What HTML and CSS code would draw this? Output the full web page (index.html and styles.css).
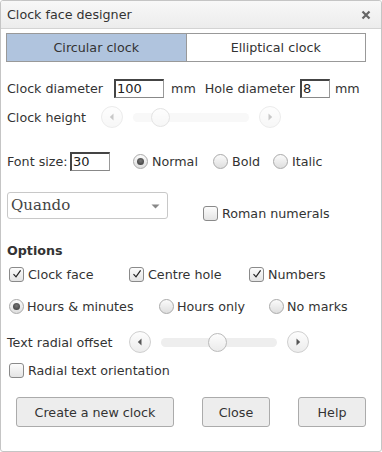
FILE: index.html
```html
<!DOCTYPE html>
<html>
<head>
<meta charset="utf-8">
<link rel="stylesheet" href="styles.css">
</head>
<body>
<div class="dialog">
  <div class="titlebar">
    <span class="title">Clock face designer</span>
    <svg class="close" width="10" height="10" viewBox="0 0 10 10"><path d="M1.5 1.5L8.5 8.5M8.5 1.5L1.5 8.5" stroke="#666" stroke-width="2.2" stroke-linecap="butt"/></svg>
  </div>
  <div class="content">
    <div class="tabs">
      <div class="tab active">Circular clock</div>
      <div class="tab">Elliptical clock</div>
    </div>

    <div class="row r1">
      <span class="lbl-dia">Clock diameter</span>
      <span class="input in-dia">100</span>
      <span class="mm1">mm</span>
      <span class="lbl-hole">Hole diameter</span>
      <span class="input in-hole">8</span>
      <span class="mm2">mm</span>
    </div>

    <div class="row r2">
      <span class="lbl-height">Clock height</span>
      <div class="slider disabled">
        <span class="sbtn"><svg width="6" height="8" viewBox="0 0 6 8"><path d="M4.5 0.5V7.5L0.8 4Z" fill="#777"/></svg></span>
        <span class="track"><span class="thumb" style="left:18px"></span></span>
        <span class="sbtn"><svg width="6" height="8" viewBox="0 0 6 8"><path d="M1.5 0.5V7.5L5.2 4Z" fill="#777"/></svg></span>
      </div>
    </div>

    <div class="row r3">
      <span class="lbl-font">Font size:</span>
      <span class="input in-font">30</span>
      <span class="ropt o-normal"><span class="radio on"></span>Normal</span>
      <span class="ropt o-bold"><span class="radio"></span>Bold</span>
      <span class="ropt"><span class="radio"></span>Italic</span>
    </div>

    <div class="row r4">
      <div class="select">
        <span class="sel-text">Quando</span>
        <svg class="caret" width="9" height="5" viewBox="0 0 9 5"><path d="M0.5 0.5H8.5L4.5 4.5Z" fill="#888"/></svg>
      </div>
      <span class="ropt roman"><span class="check"></span>Roman numerals</span>
    </div>

    <div class="heading">Options</div>

    <div class="row r6">
      <span class="ropt c1"><span class="check"><svg width="10" height="10" viewBox="0 0 10 10"><path d="M1.5 5.2L4 7.8L8.6 1.4" fill="none" stroke="#222" stroke-width="1.2"/></svg></span>Clock face</span>
      <span class="ropt c2"><span class="check"><svg width="10" height="10" viewBox="0 0 10 10"><path d="M1.5 5.2L4 7.8L8.6 1.4" fill="none" stroke="#222" stroke-width="1.2"/></svg></span>Centre hole</span>
      <span class="ropt"><span class="check"><svg width="10" height="10" viewBox="0 0 10 10"><path d="M1.5 5.2L4 7.8L8.6 1.4" fill="none" stroke="#222" stroke-width="1.2"/></svg></span>Numbers</span>
    </div>

    <div class="row r7">
      <span class="ropt h1"><span class="radio on"></span>Hours &amp; minutes</span>
      <span class="ropt h2"><span class="radio"></span>Hours only</span>
      <span class="ropt"><span class="radio"></span>No marks</span>
    </div>

    <div class="row r8">
      <span class="lbl-offset">Text radial offset</span>
      <div class="slider">
        <span class="sbtn"><svg width="6" height="8" viewBox="0 0 6 8"><path d="M4.5 0.5V7.5L0.8 4Z" fill="#555"/></svg></span>
        <span class="track"><span class="thumb" style="left:47px"></span></span>
        <span class="sbtn"><svg width="6" height="8" viewBox="0 0 6 8"><path d="M1.5 0.5V7.5L5.2 4Z" fill="#555"/></svg></span>
      </div>
    </div>

    <div class="row r9">
      <span class="ropt"><span class="check"></span>Radial text orientation</span>
    </div>

    <div class="buttons">
      <span class="btn b-create">Create a new clock</span>
      <span class="btn b-close">Close</span>
      <span class="btn b-help">Help</span>
    </div>
  </div>
</div>
</body>
</html>
```
FILE: styles.css
```css
html, body {
  margin: 0;
  padding: 0;
  background: #fff;
}
body {
  font-family: "DejaVu Sans", Verdana, sans-serif;
  font-size: 12.7px;
  color: #333;
}
.dialog {
  box-sizing: border-box;
  width: 382px;
  height: 452px;
  border: 1px solid #c5c5c5;
  border-radius: 3px;
  overflow: hidden;
}
.titlebar {
  box-sizing: border-box;
  height: 28px;
  border-bottom: 1px solid #d3d3d3;
  background: linear-gradient(#f8f8f8, #ececec);
  display: flex;
  align-items: center;
  justify-content: space-between;
  padding: 0 10px 0 6px;
}
.title {
  color: #333;
  margin-top: -1px;
}
.close {
  display: block;
}
.content {
  padding: 0 5px;
}
.tabs {
  display: flex;
  margin-top: 4px;
  height: 29px;
  width: 360px;
}
.tab {
  box-sizing: border-box;
  flex: 1;
  border: 1px solid #999;
  display: flex;
  align-items: center;
  justify-content: center;
  color: #333;
}
.tab + .tab {
  border-left: none;
}
.tab.active {
  background: #b0c4de;
}
.row {
  display: flex;
  align-items: center;
}
.r1 {
  margin-top: 15px;
  height: 22px;
}
.input {
  box-sizing: border-box;
  height: 19px;
  border-style: solid;
  border-width: 2px 1px 1px 2px;
  border-color: #444 #999 #888 #444;
  font-size: 13px;
  line-height: 15px;
  padding-left: 1px;
  color: #222;
  background: #fff;
}
.lbl-dia { margin-left: 1px; }
.in-dia { width: 50px; margin-left: 11px; }
.mm1 { margin-left: 7px; }
.lbl-hole { margin-left: 9px; }
.in-hole { width: 30px; margin-left: 5px; }
.mm2 { margin-left: 5px; }

.r2 {
  margin-top: 7px;
  height: 22px;
}
.lbl-height { margin-left: 1px; width: 94px; }
.slider {
  display: flex;
  align-items: center;
}
.sbtn {
  box-sizing: border-box;
  width: 22px;
  height: 22px;
  border-radius: 50%;
  border: 1px solid #cfcfcf;
  background: linear-gradient(#fdfdfd, #ececec);
  display: flex;
  align-items: center;
  justify-content: center;
}
.track {
  position: relative;
  width: 116px;
  height: 9px;
  border-radius: 5px;
  background: #eeeeee;
  margin: 0 10px;
}
.thumb {
  position: absolute;
  top: -5px;
  box-sizing: border-box;
  width: 19px;
  height: 19px;
  border-radius: 50%;
  border: 1px solid #bbb;
  background: linear-gradient(#fdfdfd, #ebebeb);
}
.slider.disabled {
  opacity: 0.4;
}

.r3 {
  margin-top: 23px;
  height: 20px;
}
.lbl-font { margin-left: 1px; width: 63px; }
.in-font { width: 40px; margin-left: 0; }
.ropt {
  display: flex;
  align-items: center;
}
.radio {
  box-sizing: border-box;
  width: 15px;
  height: 15px;
  border-radius: 50%;
  border: 1px solid #aaa;
  background: linear-gradient(#fbfbfb, #dedede);
  margin-right: 4px;
  display: flex;
  align-items: center;
  justify-content: center;
}
.radio.on::after {
  content: "";
  width: 7px;
  height: 7px;
  border-radius: 50%;
  background: radial-gradient(circle at 50% 40%, #777, #333);
}
.o-normal { width: 80px; margin-left: 23px; }
.o-bold { width: 60px; }

.check {
  box-sizing: border-box;
  width: 15px;
  height: 15px;
  border-radius: 3px;
  border: 1px solid #8a8a8a;
  background: linear-gradient(#fcfcfc, #e4e4e4);
  margin-right: 4px;
  display: flex;
  align-items: center;
  justify-content: center;
}
.check svg { display: block; }

.r4 {
  margin-top: 21px;
  align-items: flex-start;
}
.select {
  box-sizing: border-box;
  width: 161px;
  height: 27px;
  margin-left: 1px;
  border: 1px solid #c8c8c8;
  border-radius: 3px;
  background: #fff;
  display: flex;
  align-items: center;
  justify-content: space-between;
  padding: 0 7px 0 3px;
}
.sel-text {
  font-family: "DejaVu Serif", "Liberation Serif", serif;
  font-size: 15px;
  color: #444;
  margin-top: -2px;
}
.caret { display: block; margin-top: 1px; }
.roman {
  margin-left: 35px;
  margin-top: 14px;
}

.heading {
  font-weight: bold;
  margin-top: 21px;
  margin-left: 1px;
  height: 18px;
  line-height: 18px;
}
.r6 {
  margin-top: 5px;
  height: 18px;
  padding-left: 3px;
}
.c1 { width: 120px; }
.c2 { width: 120px; }
.r7 {
  margin-top: 14px;
  height: 18px;
  padding-left: 3px;
}
.h1 { width: 150px; }
.h2 { width: 110px; }
.r7 .radio { margin-right: 3px; }

.r8 {
  margin-top: 16px;
  height: 22px;
}
.lbl-offset { margin-left: 1px; width: 122px; }

.r9 {
  margin-top: 8px;
  height: 18px;
  padding-left: 3px;
}

.buttons {
  display: flex;
  margin-top: 18px;
  padding-left: 10px;
}
.btn {
  box-sizing: border-box;
  height: 30px;
  border: 1px solid #ababab;
  border-radius: 3px;
  background: #ededed;
  display: flex;
  align-items: center;
  justify-content: center;
  color: #333;
}
.b-create { width: 158px; }
.b-close { width: 68px; margin-left: 28px; }
.b-help { width: 68px; margin-left: 28px; }
```
